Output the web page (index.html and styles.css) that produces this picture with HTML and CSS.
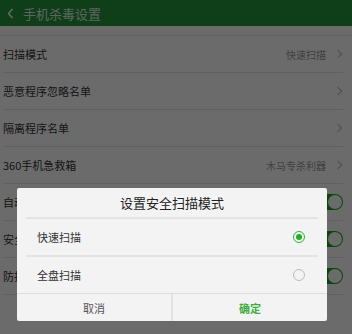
FILE: index.html
```html
<!DOCTYPE html>
<html lang="zh">
<head>
<meta charset="utf-8">
<link rel="stylesheet" href="styles.css">
</head>
<body>
<div class="screen">
  <header class="topbar">
    <svg class="back" width="7" height="11" viewBox="0 0 7 11"><polyline points="5.5,1 1.5,5.5 5.5,10" fill="none" stroke="#fff" stroke-width="1.4"/></svg>
    <span class="title">手机杀毒设置</span>
  </header>
  <div class="spacer"></div>
  <ul class="list">
    <li class="row"><span class="label">扫描模式</span><span class="value">快速扫描</span><span class="chev"></span></li>
    <li class="row"><span class="label">恶意程序忽略名单</span><span class="chev"></span></li>
    <li class="row"><span class="label">隔离程序名单</span><span class="chev"></span></li>
    <li class="row"><span class="label">360手机急救箱</span><span class="value">木马专杀利器</span><span class="chev"></span></li>
    <li class="row"><span class="label">自动云查杀</span><span class="switch"></span></li>
    <li class="row"><span class="label">安全扫描提醒</span><span class="switch"></span></li>
    <li class="row"><span class="label">防护功能开启</span><span class="switch"></span></li>
  </ul>
  <div class="overlay"></div>
  <div class="dialog">
    <div class="dtitle">设置安全扫描模式</div>
    <div class="options">
      <div class="option sep"><span>快速扫描</span><span class="radio on"></span></div>
      <div class="option"><span>全盘扫描</span><span class="radio"></span></div>
    </div>
    <div class="buttons">
      <div class="btn cancel">取消</div>
      <div class="btn ok">确定</div>
    </div>
  </div>
</div>
</body>
</html>
```
FILE: styles.css
```css
* { box-sizing: border-box; margin: 0; padding: 0; }
html, body { width: 352px; height: 334px; overflow: hidden; }
body {
  font-family: "Noto Sans CJK SC", "Noto Sans", sans-serif;
  background: #fff;
  color: #333;
}
.screen { position: relative; width: 352px; height: 334px; overflow: hidden; }
.topbar {
  height: 26px;
  background: #249639;
  display: flex;
  align-items: center;
  padding-left: 7px;
  gap: 9px;
}
.back { display: block; }
.title { color: #dfeee2; font-size: 13px; line-height: 1; }
.spacer { height: 10px; border-bottom: 1px solid #e3e3e3; }
.list { list-style: none; padding: 0 9px 0 3px; }
.row {
  height: 37px;
  border-bottom: 1px solid #e3e3e3;
  display: flex;
  align-items: center;
  font-size: 11px;
}
.label { flex: 1; color: #333; }
.value { color: #999; font-size: 10px; margin-right: 9px; }
.chev {
  width: 6px; height: 6px;
  border-top: 1px solid #bbb; border-right: 1px solid #bbb;
  transform: rotate(45deg);
  margin-right: 2px;
}
.switch {
  width: 31px; height: 16px;
  border-radius: 8px;
  background: #17a817;
  position: relative;
}
.switch::after {
  content: "";
  position: absolute;
  right: 1px; top: 1px;
  width: 14px; height: 14px;
  border-radius: 50%;
  background: #fff;
}
.overlay { position: absolute; inset: 0; background: rgba(0,0,0,0.58); }
.dialog {
  position: absolute;
  left: 17px; top: 188px;
  width: 310px; height: 133px;
  background: #f3f3f3;
  border-radius: 2px;
  display: flex;
  flex-direction: column;
}
.dtitle {
  height: 31px;
  margin: 0 9px;
  border-bottom: 2px solid #e4e4e4;
  display: flex; align-items: center; justify-content: center;
  font-size: 13px; color: #222;
}
.options { flex: 1; display: flex; flex-direction: column; margin: 0 9px; }
.option {
  flex: 1;
  display: flex; align-items: center; justify-content: space-between;
  padding: 0 13px 0 11px;
  font-size: 11px; color: #333;
}
.option.sep { border-bottom: 2px solid #e4e4e4; }
.radio {
  width: 12px; height: 12px; border-radius: 50%;
  border: 1px solid #bdbdbd;
  display: flex; align-items: center; justify-content: center;
}
.radio.on { border-color: #2fb52f; }
.radio.on::after { content: ""; width: 6px; height: 6px; border-radius: 50%; background: #22b022; }
.buttons { height: 28px; border-top: 1px solid #dedede; display: flex; }
.btn { flex: 1; display: flex; align-items: center; justify-content: center; font-size: 11px; }
.cancel { color: #555; border-right: 2px solid #e2e2e2; }
.ok { color: #3eae3e; font-weight: bold; }
```
